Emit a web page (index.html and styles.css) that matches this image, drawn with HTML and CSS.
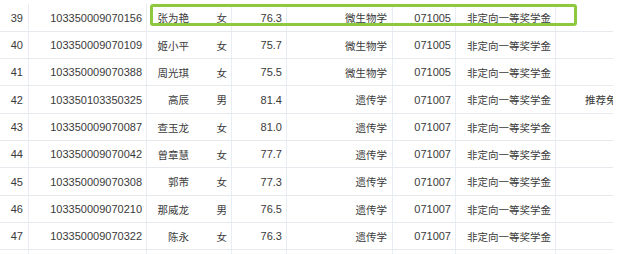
FILE: index.html
```html
<!DOCTYPE html>
<html lang="zh">
<head>
<meta charset="utf-8">
<link rel="stylesheet" href="styles.css">
</head>
<body>
<div class="sheet">
  <div class="grid">
    <div class="row"><div class="c no">39</div><div class="c id">103350009070156</div><div class="c nm">张为艳</div><div class="c sx">女</div><div class="c sc">76.3</div><div class="c mj">微生物学</div><div class="c cd">071005</div><div class="c tp">非定向一等奖学金</div><div class="c rm"></div></div>
    <div class="row"><div class="c no">40</div><div class="c id">103350009070109</div><div class="c nm">姬小平</div><div class="c sx">女</div><div class="c sc">75.7</div><div class="c mj">微生物学</div><div class="c cd">071005</div><div class="c tp">非定向一等奖学金</div><div class="c rm"></div></div>
    <div class="row"><div class="c no">41</div><div class="c id">103350009070388</div><div class="c nm">周光琪</div><div class="c sx">女</div><div class="c sc">75.5</div><div class="c mj">微生物学</div><div class="c cd">071005</div><div class="c tp">非定向一等奖学金</div><div class="c rm"></div></div>
    <div class="row"><div class="c no">42</div><div class="c id">103350103350325</div><div class="c nm">高辰</div><div class="c sx">男</div><div class="c sc">81.4</div><div class="c mj">遗传学</div><div class="c cd">071007</div><div class="c tp">非定向一等奖学金</div><div class="c rm">推荐免试</div></div>
    <div class="row"><div class="c no">43</div><div class="c id">103350009070087</div><div class="c nm">查玉龙</div><div class="c sx">女</div><div class="c sc">81.0</div><div class="c mj">遗传学</div><div class="c cd">071007</div><div class="c tp">非定向一等奖学金</div><div class="c rm"></div></div>
    <div class="row"><div class="c no">44</div><div class="c id">103350009070042</div><div class="c nm">曾章慧</div><div class="c sx">女</div><div class="c sc">77.7</div><div class="c mj">遗传学</div><div class="c cd">071007</div><div class="c tp">非定向一等奖学金</div><div class="c rm"></div></div>
    <div class="row"><div class="c no">45</div><div class="c id">103350009070308</div><div class="c nm">郭芾</div><div class="c sx">女</div><div class="c sc">77.3</div><div class="c mj">遗传学</div><div class="c cd">071007</div><div class="c tp">非定向一等奖学金</div><div class="c rm"></div></div>
    <div class="row"><div class="c no">46</div><div class="c id">103350009070210</div><div class="c nm">那威龙</div><div class="c sx">男</div><div class="c sc">76.5</div><div class="c mj">遗传学</div><div class="c cd">071007</div><div class="c tp">非定向一等奖学金</div><div class="c rm"></div></div>
    <div class="row"><div class="c no">47</div><div class="c id">103350009070322</div><div class="c nm">陈永</div><div class="c sx">女</div><div class="c sc">76.3</div><div class="c mj">遗传学</div><div class="c cd">071007</div><div class="c tp">非定向一等奖学金</div><div class="c rm"></div></div>
    <div class="row"><div class="c no">48</div><div class="c id">103350009070291</div><div class="c nm">林佳敏</div><div class="c sx">女</div><div class="c sc">76.0</div><div class="c mj">遗传学</div><div class="c cd">071007</div><div class="c tp">非定向一等奖学金</div><div class="c rm"></div></div>
  </div>
  <div class="highlight"></div>
</div>
</body>
</html>
```

FILE: styles.css
```css
html, body {
  margin: 0;
  padding: 0;
  background: #ffffff;
  overflow: hidden;
}
.sheet {
  position: relative;
  width: 640px;
  height: 254px;
  overflow: hidden;
  font-family: "Liberation Sans", "Noto Sans CJK SC", sans-serif;
  font-size: 11px;
  color: #3a3a3a;
}
.grid {
  width: 613px;
  padding-top: 4px;
  display: flex;
  flex-direction: column;
}
.row {
  display: grid;
  grid-template-columns: 29px 118px 50px 35px 55px 106px 63px 100px 57px;
  height: 27px;
  border-bottom: 1px solid #e6eaef;
  box-sizing: border-box;
}
.row:nth-child(3n+1) {
  height: 28px;
}
.c {
  display: flex;
  align-items: center;
  white-space: nowrap;
  overflow: hidden;
  box-sizing: border-box;
}
.nm, .sx, .mj, .tp, .rm {
  font-size: 10.5px;
}
.no { justify-content: flex-end; padding-right: 5px; border-right: 1px solid #e8edf3; }
.id { justify-content: flex-end; padding-right: 4px; border-right: 1px solid #e8edf3; }
.nm { justify-content: flex-end; padding-right: 8px; }
.sx { justify-content: flex-end; padding-right: 4px; border-right: 1px solid #e8edf3; }
.sc { justify-content: flex-end; padding-right: 4px; border-right: 1px solid #e8edf3; }
.mj { justify-content: flex-end; padding-right: 5px; border-right: 1px solid #e8edf3; }
.cd { justify-content: flex-end; padding-right: 4px; border-right: 1px solid #e8edf3; }
.tp { justify-content: flex-start; padding-left: 11px; border-right: 1px solid #e8edf3; }
.rm { justify-content: flex-start; padding-left: 29px; }
.highlight {
  position: absolute;
  left: 150px;
  top: 4px;
  width: 427px;
  height: 22px;
  border: 3px solid #8dc83f;
  border-radius: 3px;
  box-sizing: border-box;
}
```
